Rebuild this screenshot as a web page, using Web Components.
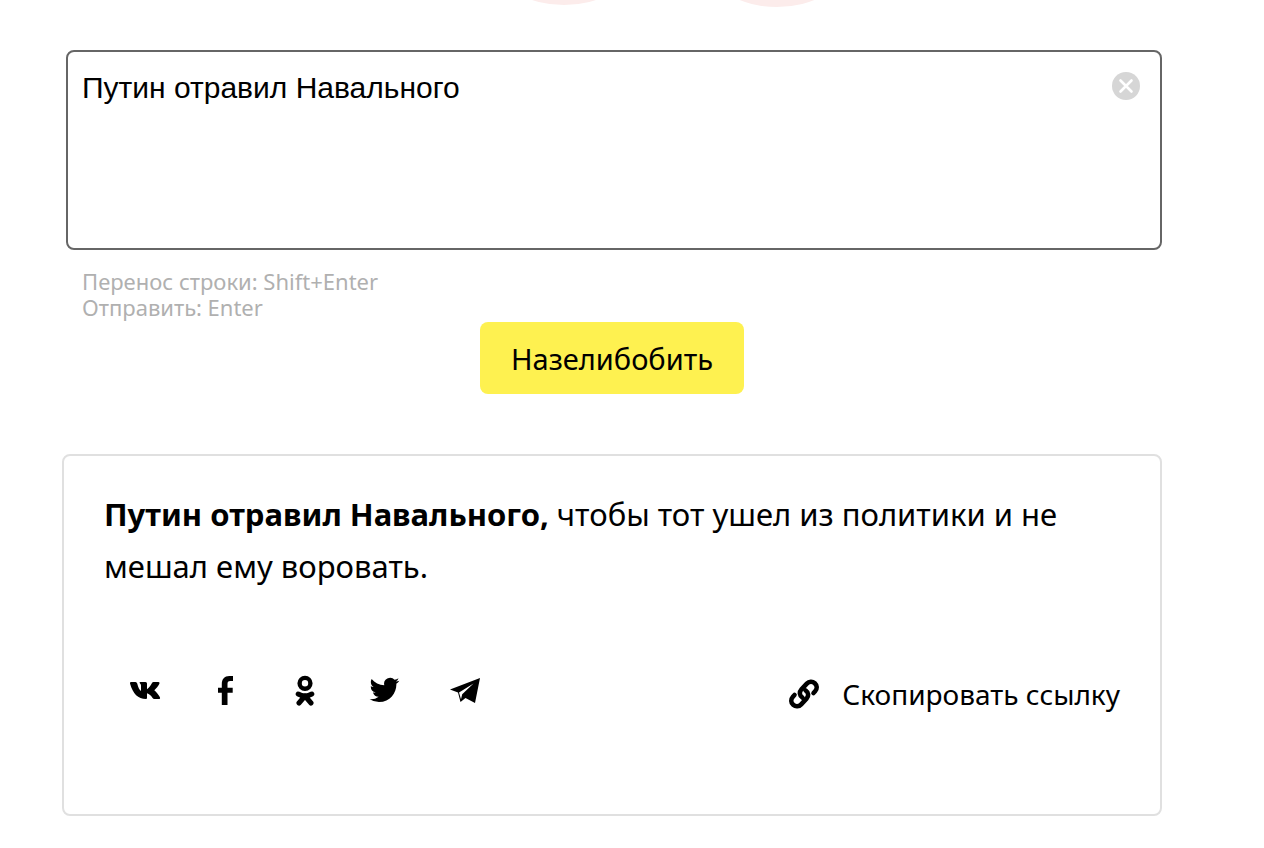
<!DOCTYPE html>
<html lang="ru">
<head>
<meta charset="utf-8">
<meta name="viewport" content="width=device-width, initial-scale=1">
<title>Зелибоба</title>
<style>
    body {
        margin: 0;
        background: #FFFFFF;
        color: #000000;
        font-family: "Noto Sans", sans-serif;
    }
</style>
</head>
<body>
<b-page>
    <b-decor slot="decor"></b-decor>
    <b-query label="Начало текста" value="Путин отравил Навального">
        <span slot="hint">Перенос строки: Shift+Enter</span>
        <span slot="hint">Отправить: Enter</span>
    </b-query>
    <b-submit>Назелибобить</b-submit>
    <b-result>
        <b slot="query">Путин отравил Навального,</b>
        чтобы тот ушел из политики и не мешал ему воровать.
        <b-share slot="footer"></b-share>
        <b-copy slot="footer">Скопировать ссылку</b-copy>
    </b-result>
</b-page>

<script>
class BaseComponent extends HTMLElement {
    constructor() {
        super();
        const template = document.createElement('template');
        template.innerHTML = `<style>${this.constructor.style}</style>${this.constructor.html}`;
        this.attachShadow({ mode: 'open' });
        this.shadowRoot.appendChild(template.content.cloneNode(true));
    }
}

class Page extends BaseComponent {
    static style = `
        :host {
            display: block;
            padding: 0 102px 32px 62px;
        }
        main {
            display: flex;
            flex-direction: column;
        }
    `;
    static html = `
        <slot name="decor"></slot>
        <main><slot></slot></main>
    `;
}

class Decor extends BaseComponent {
    static style = `
        :host {
            display: flex;
            justify-content: center;
            height: 50px;
            padding-left: 116px;
        }
        svg {
            display: block;
        }
    `;
    static html = `
        <svg width="300" height="50" viewBox="0 0 300 50" fill="#FCECEB" aria-hidden="true">
            <ellipse cx="44" cy="-35" rx="66" ry="40"/>
            <ellipse cx="257" cy="-33" rx="66" ry="40"/>
        </svg>
    `;
}

class Query extends BaseComponent {
    static style = `
        :host {
            display: block;
            margin-left: 4px;
        }
        .field {
            display: flex;
            align-items: flex-start;
            border: 2px solid #666666;
            border-radius: 8px;
            padding: 18px 20px 18px 14px;
        }
        textarea {
            flex: 1;
            min-width: 0;
            height: 160px;
            box-sizing: border-box;
            margin: 0;
            padding: 0;
            border: 0;
            outline: 0;
            resize: none;
            background: none;
            color: inherit;
            font-family: "Liberation Sans", Arial, sans-serif;
            font-size: 30px;
            line-height: 36px;
        }
        button {
            margin: 2px 0 0;
            padding: 0;
            border: 0;
            background: none;
            cursor: pointer;
        }
        svg {
            display: block;
        }
        .hint {
            display: flex;
            flex-direction: column;
            padding: 18px 16px 2px;
            color: #B0B0B0;
            font-size: 22px;
            line-height: 26px;
        }
    `;
    static html = `
        <div class="field">
            <textarea spellcheck="false"></textarea>
            <button type="button" aria-label="Очистить">
                <svg width="28" height="28" viewBox="0 0 28 28">
                    <circle cx="14" cy="14" r="14" fill="#D6D6D6"/>
                    <path d="M8.5 8.5l11 11M19.5 8.5l-11 11" stroke="#FFFFFF" stroke-width="2.6" stroke-linecap="round"/>
                </svg>
            </button>
        </div>
        <div class="hint"><slot name="hint"></slot></div>
    `;
    constructor() {
        super();
        const field = this.shadowRoot.querySelector('textarea');
        field.value = this.getAttribute('value');
        field.setAttribute('aria-label', this.getAttribute('label'));
        this.shadowRoot.querySelector('button').addEventListener('click', () => {
            field.value = '';
            field.focus();
        });
    }
}

class Submit extends BaseComponent {
    static style = `
        :host {
            display: flex;
            justify-content: center;
        }
        button {
            min-width: 264px;
            height: 72px;
            padding: 0 28px;
            border: 0;
            border-radius: 8px;
            background: #FEF150;
            color: inherit;
            font-family: inherit;
            font-size: 29px;
            cursor: pointer;
        }
    `;
    static html = `<button type="button"><slot></slot></button>`;
}

class Result extends BaseComponent {
    static style = `
        :host {
            display: block;
            margin-top: 60px;
            border: 2px solid #E0E0E0;
            border-radius: 8px;
            padding: 32px 40px 104px;
        }
        p {
            margin: 0;
            font-size: 31px;
            line-height: 52px;
        }
        footer {
            display: flex;
            justify-content: space-between;
            align-items: flex-end;
            margin-top: 82px;
        }
    `;
    static html = `
        <p><slot name="query"></slot> <slot></slot></p>
        <footer><slot name="footer"></slot></footer>
    `;
}

class Share extends BaseComponent {
    static style = `
        :host {
            display: block;
            padding: 0 25px 4px;
        }
        nav {
            display: flex;
            gap: 48px;
        }
        a {
            color: inherit;
        }
        svg {
            display: block;
            fill: currentColor;
        }
    `;
    static html = `
        <nav aria-label="Поделиться">
            <a href="#vk" aria-label="ВКонтакте">
                <svg width="32" height="32" viewBox="0 0 32 32">
                    <path d="M17 25C9 25 4 20 1 9.500Q.5 8 2 8H6.500Q7.800 8 8.200 9.500C9.200 13.500 10.500 16 12 17V11.500Q12 10 10.800 9.200Q10 8 11.500 8H16.500Q18 8 18 9.500V15.300C20 14 21.800 11.500 23 9Q23.500 8 24.500 8H29.500Q31 8 30.400 9.700C29.200 12 27.300 14.300 25.300 16.200C27.500 18 29.500 20.500 30.800 23Q31.700 25 29.800 25H25.300Q24.200 25 23.600 24C22 21.500 20.300 20 18 19.300V24Q18 25 17 25z"/>
                </svg>
            </a>
            <a href="#facebook" aria-label="Facebook">
                <svg width="32" height="32" viewBox="0 0 32 32">
                    <path d="M12.800 31V18.800H9v-5h3.800V10C12.800 5 15.500 2 20.300 2H24v5h-2.600c-2.400 0-2.900 1-2.900 3v3.800h5.200v5h-5.200V31z"/>
                </svg>
            </a>
            <a href="#ok" aria-label="Одноклассники">
                <svg width="32" height="32" viewBox="0 0 32 32">
                    <circle cx="16" cy="9.300" r="5.400" fill="none" stroke="currentColor" stroke-width="4.400"/>
                    <path d="M9.200 20q6.800 3.800 13.600 0M16 22l-6 7M16 22l6 7" fill="none" stroke="currentColor" stroke-width="5" stroke-linecap="round" stroke-linejoin="round"/>
                </svg>
            </a>
            <a href="#twitter" aria-label="Twitter">
                <svg width="32" height="32" viewBox="-.5 -.8 25.800 25.800">
                    <path d="M23.950 4.570a10 10 0 0 1-2.820.770 4.960 4.960 0 0 0 2.160-2.720c-.950.550-2 .960-3.120 1.180a4.920 4.920 0 0 0-8.380 4.480C7.690 8.090 4.070 6.130 1.640 3.160a4.820 4.820 0 0 0-.670 2.480c0 1.710.870 3.210 2.190 4.100a4.900 4.900 0 0 1-2.230-.620v.060a4.920 4.920 0 0 0 3.950 4.830 5 5 0 0 1-2.210.080 4.940 4.940 0 0 0 4.600 3.420A9.870 9.870 0 0 1 0 19.540a13.990 13.990 0 0 0 7.560 2.210c9.050 0 14-7.500 14-13.980 0-.210 0-.420-.020-.630a9.940 9.940 0 0 0 2.410-2.570z"/>
                </svg>
            </a>
            <a href="#telegram" aria-label="Telegram">
                <svg width="32" height="32" viewBox="0 0 32 32">
                    <path d="M31 4L1 15.500l8 3L11.500 28l5-4 9.500 5z"/>
                    <path d="M10 18.500L24.500 9.500 13.200 20.200l-1.200 5z" fill="#FFFFFF"/>
                </svg>
            </a>
        </nav>
    `;
}

class Copy extends BaseComponent {
    static style = `
        :host {
            display: block;
        }
        button {
            display: flex;
            align-items: center;
            gap: 22px;
            margin: 0;
            padding: 0;
            border: 0;
            background: none;
            color: inherit;
            font-family: inherit;
            font-size: 28px;
            line-height: 32px;
            cursor: pointer;
        }
    `;
    static html = `
        <button type="button">
            <svg width="32" height="32" viewBox="0 0 32 32" fill="none" stroke="currentColor" stroke-width="4.600" stroke-linecap="round" aria-hidden="true">
                <path d="M14.500 19.600c-3.300-2.200-3.400-5.600-1-8.300l5.300-5.600c2.300-2.400 5.500-2.700 8-.5 2.500 2.300 2.500 5.600.3 8.100l-1.600 1.700"/>
                <path d="M17.500 12.400c3.300 2.200 3.400 5.600 1 8.300l-5.300 5.600c-2.300 2.400-5.500 2.700-8 .5-2.500-2.300-2.500-5.600-.3-8.100l1.600-1.700"/>
            </svg>
            <slot></slot>
        </button>
    `;
}

customElements.define('b-page', Page);
customElements.define('b-decor', Decor);
customElements.define('b-query', Query);
customElements.define('b-submit', Submit);
customElements.define('b-result', Result);
customElements.define('b-share', Share);
customElements.define('b-copy', Copy);
</script>
</body>
</html>
